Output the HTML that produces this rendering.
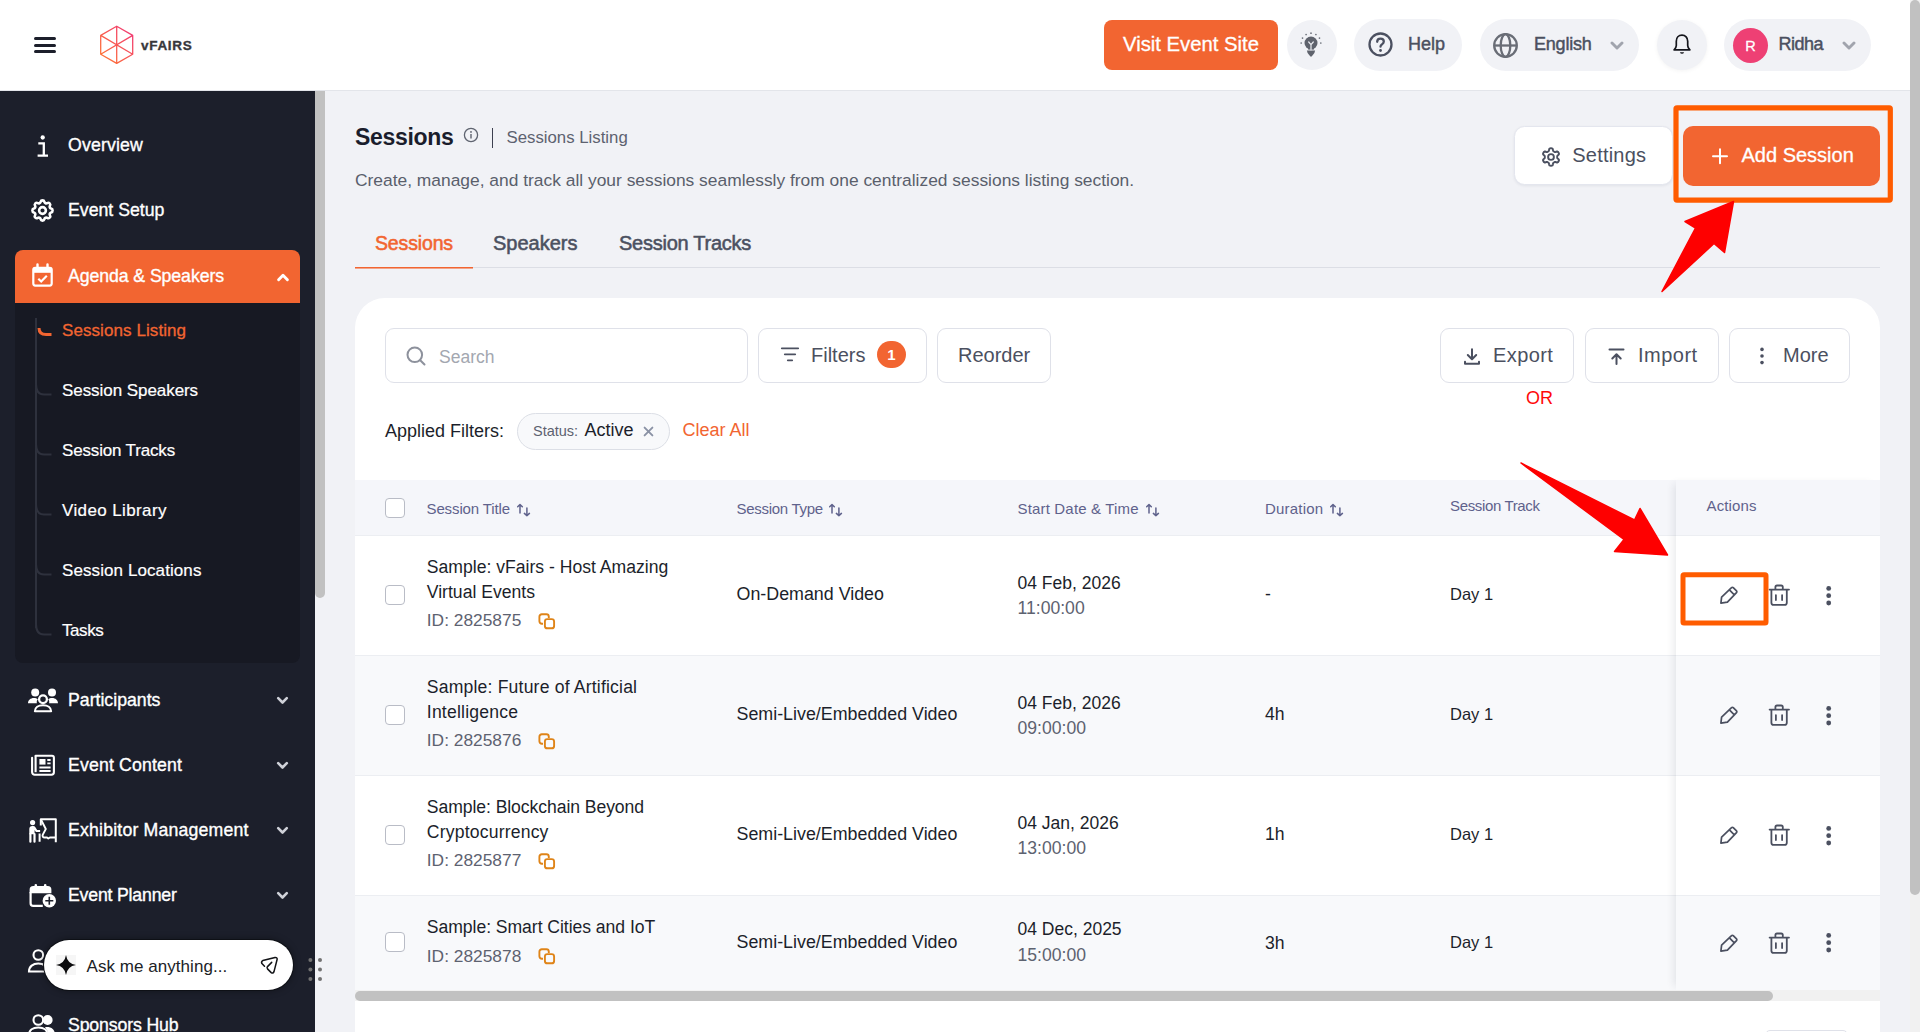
<!DOCTYPE html>
<html lang="en">
<head>
<meta charset="utf-8">
<title>Sessions</title>
<style>
*{box-sizing:border-box;margin:0;padding:0}
html,body{width:1920px;height:1032px;overflow:hidden;background:#f1f2f6;font-family:"Liberation Sans",sans-serif;color:#1c1f2b}
.abs{position:absolute}
.t{position:absolute;white-space:nowrap;line-height:1}
svg{display:block}
/* header */
#hdr{position:absolute;left:0;top:0;width:1910px;height:91px;background:#fff;border-bottom:1px solid #e3e5ea}
.pill{position:absolute;background:#f1f2f6;border-radius:26px;height:51px;top:19px}
/* sidebar */
#sb{position:absolute;left:0;top:91px;width:315px;height:941px;background:#1c1f2b;overflow:hidden}
.nav{position:absolute;left:68px;color:#fff;font-size:17.700px;white-space:nowrap;line-height:20px;-webkit-text-stroke:0.35px #fff}
.sub{position:absolute;left:62px;color:#fff;font-size:17px;white-space:nowrap;line-height:20px;-webkit-text-stroke:0.2px #fff}
/* main */
#card{position:absolute;left:355px;top:298px;width:1525px;height:760px;background:#fff;border-radius:30px}
.btn{position:absolute;top:328px;height:55px;border:1px solid #dfe1e9;border-radius:9px;background:#fff}
.th{position:absolute;font-size:15px;color:#5f628c;white-space:nowrap;line-height:18px}
.td{position:absolute;font-size:17px;color:#1c1f2b;white-space:nowrap;line-height:20px}
.tm{position:absolute;font-size:17px;color:#5d6270;white-space:nowrap;line-height:20px}
.cb{position:absolute;left:385px;width:20px;height:20px;border:1px solid #b9bcc6;border-radius:4px;background:#fff}
.ttl{font-size:17.600px}.typ{font-size:17.850px}.dat{font-size:17.500px}.tim{font-size:17.600px}.idn{font-size:17.350px}.day{font-size:16.500px}.dur{font-size:17.600px}
.row{position:absolute;left:355px;width:1525px;border-top:1px solid #eceef2}
</style>
</head>
<body>
<!-- ============ HEADER ============ -->
<div id="hdr">
  <!-- hamburger -->
  <div class="abs" style="left:34px;top:37px;width:22px;height:3px;border-radius:2px;background:#1c1f2b"></div>
  <div class="abs" style="left:34px;top:43.5px;width:22px;height:3px;border-radius:2px;background:#1c1f2b"></div>
  <div class="abs" style="left:34px;top:50px;width:22px;height:3px;border-radius:2px;background:#1c1f2b"></div>
  <!-- logo -->
  <svg class="abs" style="left:98px;top:24px" width="38" height="42" viewBox="0 0 38 42">
    <defs><linearGradient id="lg" x1="0" y1="1" x2="1" y2="0"><stop offset="0" stop-color="#ff7a2f"/><stop offset="1" stop-color="#f0357a"/></linearGradient></defs>
    <path d="M18.7 2.2 L34.7 11.4 L34.7 30.2 L18.7 39.4 L2.7 30.2 L2.7 11.4 Z M18.7 2.2 L18.7 39.4 M2.7 11.4 L34.7 30.2 M34.7 11.4 L2.7 30.2" fill="none" stroke="url(#lg)" stroke-width="1.3" stroke-linejoin="round"/>
  </svg>
  <div class="t" style="left:141px;top:38.600px;font-size:13.500px;font-weight:bold;color:#37373b;letter-spacing:0.700px;-webkit-text-stroke:0.35px #37373b">vFAIRS</div>

  <!-- visit event site -->
  <div class="abs" style="left:1104px;top:20px;width:174px;height:50px;border-radius:8px;background:#f26531"></div>
  <div class="t" id="ves" style="left:1123px;top:33.500px;font-size:20.300px;color:#fff;-webkit-text-stroke:0.3px #fff">Visit Event Site</div>
  <!-- bulb -->
  <div class="abs" style="left:1287px;top:20px;width:50px;height:50px;border-radius:25px;background:#f1f2f6"></div>
  <svg class="abs" style="left:1299.300px;top:31.400px" width="24" height="27" viewBox="0 0 24 27">
    <circle cx="12" cy="12" r="6.500" fill="#5f636d"/>
    <path d="M9 17h6v1.500h-6z" fill="#5f636d"/>
    <path d="M7.900 19.600h8.200l-.7 2.400-2.600 3.300c-.4.500-1.200.5-1.600 0l-2.600-3.300z" fill="#5f636d"/>
    <path d="M12 18.800v-5.200m0 0-2.300-2.600m2.300 2.600 2.300-2.600" stroke="#eceef3" stroke-width="1.200" fill="none" stroke-linecap="round"/>
    <g fill="#6d717b"><circle cx="2.20" cy="12.00" r="0.850"/><circle cx="3.51" cy="7.10" r="0.850"/><circle cx="7.10" cy="3.51" r="0.850"/><circle cx="12.00" cy="2.20" r="0.850"/><circle cx="16.90" cy="3.51" r="0.850"/><circle cx="20.49" cy="7.10" r="0.850"/><circle cx="21.80" cy="12.00" r="0.850"/></g>
  </svg>
  <!-- help -->
  <div class="pill" style="left:1354px;width:108px;height:52px"></div>
  <svg class="abs" style="left:1367px;top:31.200px" width="27" height="27" viewBox="0 0 27 27"><circle cx="13.500" cy="13.500" r="11" fill="none" stroke="#4b5060" stroke-width="2.300"/><path d="M10.200 10.800c0-1.900 1.400-3.200 3.300-3.200s3.300 1.200 3.300 3c0 1.600-1 2.200-2 2.900-.9.600-1.300 1.100-1.300 2.200" fill="none" stroke="#4b5060" stroke-width="2.300" stroke-linecap="round"/><circle cx="13.500" cy="19.500" r="1.400" fill="#4b5060"/></svg>
  <div class="t" id="help" style="left:1408px;top:35px;font-size:18px;color:#4b5060;-webkit-text-stroke:0.45px #4b5060">Help</div>
  <!-- english -->
  <div class="pill" style="left:1480px;width:159px;height:52px"></div>
  <svg class="abs" style="left:1492px;top:32px" width="27" height="27" viewBox="0 0 27 27"><g fill="none" stroke="#696d76" stroke-width="2.300"><circle cx="13.500" cy="13.500" r="11.300"/><ellipse cx="13.500" cy="13.500" rx="4.800" ry="11.300"/><path d="M2.200 13.500h22.600"/></g></svg>
  <div class="t" id="eng" style="left:1534px;top:35px;font-size:18px;letter-spacing:-0.200px;color:#4b5060;-webkit-text-stroke:0.45px #4b5060">English</div>
  <svg class="abs" style="left:1610px;top:40.500px" width="14" height="10" viewBox="0 0 14 10"><path d="M2 2l5 5 5-5" fill="none" stroke="#a1a4ad" stroke-width="2.900" stroke-linecap="round" stroke-linejoin="round"/></svg>
  <!-- bell -->
  <div class="abs" style="left:1657px;top:20px;width:50px;height:50px;border-radius:25px;background:#f1f2f6;box-shadow:0 1px 4px rgba(0,0,0,.05)"></div>
  <svg class="abs" style="left:1671px;top:33px" width="22" height="24" viewBox="0 0 22 24"><path d="M11 2.200c-3.400 0-5.700 2.600-5.700 6v4.300c0 1.600-.8 3-2.200 4.300h15.800c-1.400-1.300-2.200-2.700-2.200-4.300V8.200c0-3.400-2.300-6-5.700-6z" fill="none" stroke="#15161c" stroke-width="1.700" stroke-linejoin="round"/><path d="M8.900 19.300a2.200 2.200 0 0 0 4.200 0z" fill="#15161c"/></svg>
  <!-- user -->
  <div class="pill" style="left:1724px;width:147px;height:52px"></div>
  <div class="abs" style="left:1733px;top:27.600px;width:35px;height:35px;border-radius:18px;background:#ee4074"></div>
  <div class="t" style="left:1745.300px;top:38.500px;font-size:14.500px;color:#fff;-webkit-text-stroke:0.3px #fff">R</div>
  <div class="t" id="ridha" style="left:1778.500px;top:35px;font-size:18px;letter-spacing:-0.500px;color:#4b5060;-webkit-text-stroke:0.45px #4b5060">Ridha</div>
  <svg class="abs" style="left:1842px;top:40.500px" width="14" height="10" viewBox="0 0 14 10"><path d="M2 2l5 5 5-5" fill="none" stroke="#a1a4ad" stroke-width="2.900" stroke-linecap="round" stroke-linejoin="round"/></svg>
</div>

<!-- ============ SIDEBAR ============ -->
<div id="sb"></div>
<!-- nav icons + labels -->
<svg class="abs" style="left:36px;top:134px" width="13" height="25" viewBox="0 0 13 25"><circle cx="6.700" cy="3.500" r="2.150" fill="#fff"/><path d="M2.300 9.400h5.500v12.300M1.600 21.700h10.400" fill="none" stroke="#fff" stroke-width="2.300"/></svg>
<div class="nav" style="top:135px;letter-spacing:0.16px">Overview</div>
<svg class="abs" style="left:29.300px;top:196.900px" width="27" height="27" viewBox="0 0 24 24"><g fill="none" stroke="#fff" stroke-width="2.300" stroke-linecap="round" stroke-linejoin="round"><path d="M10.325 4.317c.426-1.756 2.924-1.756 3.350 0a1.724 1.724 0 0 0 2.573 1.066c1.543-.94 3.310.826 2.370 2.370a1.724 1.724 0 0 0 1.065 2.572c1.756.426 1.756 2.924 0 3.350a1.724 1.724 0 0 0-1.066 2.573c.94 1.543-.826 3.310-2.370 2.370a1.724 1.724 0 0 0-2.572 1.065c-.426 1.756-2.924 1.756-3.350 0a1.724 1.724 0 0 0-2.573-1.066c-1.543.94-3.310-.826-2.370-2.370a1.724 1.724 0 0 0-1.065-2.572c-1.756-.426-1.756-2.924 0-3.350a1.724 1.724 0 0 0 1.066-2.573c-.94-1.543.826-3.310 2.370-2.370 1 .608 2.296.070 2.572-1.065z"/><circle cx="12" cy="12" r="3"/></g></svg>
<div class="nav" style="top:200px">Event Setup</div>
<!-- active -->
<div class="abs" style="left:15px;top:250px;width:285px;height:53px;background:#f26531;border-radius:8px 8px 0 0"></div>
<div class="abs" style="left:15px;top:303px;width:285px;height:360px;background:#171923;border-radius:0 0 8px 8px"></div>
<svg class="abs" style="left:31px;top:263px" width="23" height="25" viewBox="0 0 23 25"><path d="M6.500 1.500v3.200M16.500 1.500v3.200" stroke="#fff" stroke-width="2.400" stroke-linecap="round"/><rect x="2.300" y="4.800" width="18.400" height="17.800" rx="2" fill="none" stroke="#fff" stroke-width="2.200"/><rect x="2.300" y="4.800" width="18.400" height="5" fill="#fff"/><path d="M7.300 15.700l2.900 2.800 5.600-5.700" fill="none" stroke="#fff" stroke-width="2.200"/></svg>
<div class="nav" style="top:265.500px;letter-spacing:-0.08px">Agenda &amp; Speakers</div>
<svg class="abs" style="left:275.800px;top:272px" width="14" height="10" viewBox="0 0 14 10"><path d="M2.600 7.700l4.400-4.400 4.400 4.400" fill="none" stroke="#fff" stroke-width="2.900" stroke-linecap="round" stroke-linejoin="round"/></svg>
<!-- tree -->
<div class="abs" style="left:35px;top:318px;width:2px;height:310px;background:#2e313d"></div>
<svg class="abs" style="left:35px;top:318px" width="20" height="330" viewBox="0 0 20 330" fill="none" stroke-linecap="butt">
  <path d="M4 10c0 5 3 6.500 7 6.500h5.500" stroke="#f26531" stroke-width="3"/>
  <g stroke="#2e313d" stroke-width="2"><path d="M1 66c0 7 3 10.500 8 10.500h7.500"/><path d="M1 126c0 7 3 10.500 8 10.500h7.500"/><path d="M1 186c0 7 3 10.500 8 10.500h7.500"/><path d="M1 246c0 7 3 10.500 8 10.500h7.500"/><path d="M1 306c0 7 3 10.500 8 10.500h7.500"/></g>
</svg>
<div class="sub" style="top:320.500px;color:#f26531;-webkit-text-stroke:0.3px #f26531;letter-spacing:0.080px">Sessions Listing</div>
<div class="sub" style="top:380.500px;letter-spacing:-0.06px">Session Speakers</div>
<div class="sub" style="top:440.500px;letter-spacing:-0.16px">Session Tracks</div>
<div class="sub" style="top:500.500px;letter-spacing:0.38px">Video Library</div>
<div class="sub" style="top:560.500px;letter-spacing:0.09px">Session Locations</div>
<div class="sub" style="top:620.500px;letter-spacing:-0.44px">Tasks</div>
<!-- lower nav -->
<div class="nav" style="top:690px">Participants</div><svg class="abs" style="left:276px;top:696px" width="13" height="9" viewBox="0 0 13 9"><path d="M2.200 2.200l4.300 4.300 4.300-4.300" fill="none" stroke="#cfd1d8" stroke-width="2.600" stroke-linecap="round" stroke-linejoin="round"/></svg>
<div class="nav" style="top:755px;letter-spacing:0.146px">Event Content</div><svg class="abs" style="left:276px;top:761px" width="13" height="9" viewBox="0 0 13 9"><path d="M2.200 2.200l4.300 4.300 4.300-4.300" fill="none" stroke="#cfd1d8" stroke-width="2.600" stroke-linecap="round" stroke-linejoin="round"/></svg>
<div class="nav" style="top:820px;letter-spacing:0.185px">Exhibitor Management</div><svg class="abs" style="left:276px;top:826px" width="13" height="9" viewBox="0 0 13 9"><path d="M2.200 2.200l4.300 4.300 4.300-4.300" fill="none" stroke="#cfd1d8" stroke-width="2.600" stroke-linecap="round" stroke-linejoin="round"/></svg>
<div class="nav" style="top:885px;letter-spacing:-0.19px">Event Planner</div><svg class="abs" style="left:276px;top:891px" width="13" height="9" viewBox="0 0 13 9"><path d="M2.200 2.200l4.300 4.300 4.300-4.300" fill="none" stroke="#cfd1d8" stroke-width="2.600" stroke-linecap="round" stroke-linejoin="round"/></svg>
<div class="nav" style="top:1015px;letter-spacing:-0.14px">Sponsors Hub</div>
<!-- sidebar scrollbar -->
<div class="abs" style="left:315px;top:91px;width:12px;height:941px;background:#f1f2f6"></div>
<div class="abs" style="left:315px;top:91px;width:10px;height:506.500px;background:#c1c1c1;border-radius:0 0 5px 5px"></div>


<!-- participants icon -->
<svg class="abs" style="left:27px;top:687px" width="32" height="26" viewBox="0 0 32 26">
  <circle cx="8.200" cy="5.600" r="4" fill="#fff"/><circle cx="25" cy="5.600" r="4" fill="#fff"/>
  <path d="M1 16.300c0-3.200 2.600-5.300 5.800-5.300 1.700 0 3 .4 4 1.300-1 1.100-1.300 2.500-.900 4z" fill="#fff"/>
  <path d="M31 16.300c0-3.200-2.600-5.300-5.800-5.300-1.700 0-3 .4-4 1.300 1 1.100 1.300 2.500.900 4z" fill="#fff"/>
  <circle cx="16" cy="12.300" r="3.900" fill="none" stroke="#fff" stroke-width="2.300"/>
  <path d="M7.900 24.300c0-3.800 3.400-6.100 8.100-6.100s8.100 2.300 8.100 6.100z" fill="none" stroke="#fff" stroke-width="2.100" stroke-linejoin="round"/>
</svg>
<!-- event content icon -->
<svg class="abs" style="left:29px;top:753px" width="28" height="24" viewBox="0 0 28 24">
  <path d="M6.600 2.800h16.400c1.100 0 1.900.8 1.900 1.900v14.600c0 1.400-1 2.400-2.400 2.400H5.700c-1.500 0-2.600-1.100-2.600-2.600V4.800" fill="none" stroke="#fff" stroke-width="2.100" stroke-linecap="round"/>
  <path d="M6.600 2.800v16.400" stroke="#fff" stroke-width="2.100"/>
  <rect x="10.400" y="6" width="6.100" height="5.600" fill="#fff"/>
  <path d="M18.300 7h3.300M18.300 10.400h3.300M10.400 14.500h11.200M10.400 18h11.200" stroke="#fff" stroke-width="1.800"/>
</svg>
<!-- exhibitor icon -->
<svg class="abs" style="left:28px;top:817px" width="30" height="27" viewBox="0 0 30 27">
  <circle cx="4.600" cy="5.600" r="2.600" fill="#fff"/>
  <path d="M1.300 12c0-1.700 1.200-2.900 2.900-2.900h1c1 0 1.700.4 2.200 1.200l1.700 2.600h3v2.200h-4.200l-1.300-2v4.200h-5.300z" fill="#fff"/>
  <path d="M2.400 17v7.700M6.500 17v7.700" fill="none" stroke="#fff" stroke-width="2.200" stroke-linecap="round"/>
  <path d="M12.800 8.500v-6.300h15v20M11.600 16.500v8.300M27.800 22.200v3" fill="none" stroke="#fff" stroke-width="2" stroke-linejoin="round"/>
  <path d="M12.800 2.200l5 9.800-3 5.600c-.7 1.600.2 2.900 1.800 2.900h2.400l1.300 1 1.600-1h5.900" fill="none" stroke="#fff" stroke-width="1.900" stroke-linejoin="round"/>
</svg>
<!-- event planner icon -->
<svg class="abs" style="left:28px;top:882px" width="30" height="27" viewBox="0 0 30 27">
  <path d="M7.800 3.400v2.600M17.200 3.400v2.600" stroke="#fff" stroke-width="2.600" stroke-linecap="round"/>
  <path d="M2.600 10.300v-2.600c0-1.600 1.100-2.700 2.700-2.700h14.400c1.600 0 2.700 1.100 2.700 2.700v2.600z" fill="#fff" stroke="#fff" stroke-width="2"/>
  <path d="M2.600 10v11.200c0 1.600 1.100 2.700 2.700 2.700h9.500" fill="none" stroke="#fff" stroke-width="2.200"/>
  <circle cx="21.300" cy="18.700" r="6.700" fill="#fff"/>
  <path d="M21.300 14.700v8M17.300 18.700h8" stroke="#1c1f2b" stroke-width="1.600"/>
</svg>
<!-- hidden user icon -->
<svg class="abs" style="left:27px;top:946px" width="24" height="28" viewBox="0 0 24 28"><circle cx="11.300" cy="9" r="4.800" fill="none" stroke="#fff" stroke-width="2.100"/><path d="M2 25.500c0-5 4-8 9.300-8s9.300 3 9.300 8z" fill="none" stroke="#fff" stroke-width="2.100"/></svg>
<!-- sponsors icon -->
<svg class="abs" style="left:27px;top:1011px" width="30" height="24" viewBox="0 0 30 24"><circle cx="11.300" cy="9" r="4.800" fill="none" stroke="#fff" stroke-width="2.100"/><circle cx="20.600" cy="9" r="5" fill="#fff"/><path d="M2 24c0-5 4-7.500 9.300-7.500s9.300 2.500 9.300 7.500" fill="none" stroke="#fff" stroke-width="2.100"/><path d="M18 16.200c5.500-.8 10 1.800 10 7.800h-5" fill="#fff"/></svg>
<!-- ask pill -->
<div class="abs" style="left:43.700px;top:939.700px;width:249.400px;height:50px;border-radius:25px;background:#fff;box-shadow:0 0 0 1px #0e1016,0 0 7px 1px rgba(0,0,0,.35)"></div>
<div class="abs" style="left:56px;top:955px;width:20px;height:20px;background:#f6f6f6"></div>
<svg class="abs" style="left:56px;top:955px" width="20" height="20" viewBox="0 0 20 20"><path d="M10 0Q11.300 8.700 20 10Q11.300 11.300 10 20Q8.700 11.300 0 10Q8.700 8.700 10 0Z" fill="#0c0c0e"/></svg>
<div class="t" id="ask" style="left:86.500px;top:957.800px;letter-spacing:0.050px;font-size:17px;color:#202226">Ask me anything...</div>
<svg class="abs" style="left:255px;top:950px" width="30" height="30" viewBox="255 950 30 30"><path d="M264.500 966.300L261.900 963.600Q260.900 961.700 262.800 960.600L275 957.600Q277.600 957.400 277.100 959.500L274 971.600Q273 973.900 271.200 972.600L267.500 968.900Q266.600 967.600 267.500 966.600L271.700 962.400" fill="none" stroke="#121316" stroke-width="1.500" stroke-linecap="round" stroke-linejoin="round"/></svg>
<!-- drag dots -->
<svg class="abs" style="left:307px;top:956px" width="18" height="28" viewBox="0 0 18 28"><g fill="#727272"><circle cx="3.400" cy="4" r="2"/><circle cx="13" cy="4" r="2"/><circle cx="3.400" cy="13.500" r="2"/><circle cx="13" cy="13.500" r="2"/><circle cx="3.400" cy="23" r="2"/><circle cx="13" cy="23" r="2"/></g></svg>
<!-- ============ MAIN ============ -->
<!-- title -->
<div class="t" id="ttl" style="left:355px;top:122.500px;font-size:23px;letter-spacing:-0.3px;font-weight:bold;color:#1a1d2c;line-height:28px">Sessions</div>
<svg class="abs" style="left:463px;top:127px" width="16" height="16" viewBox="0 0 16 16"><circle cx="8" cy="8" r="6.600" fill="none" stroke="#5f6470" stroke-width="1.300"/><circle cx="8" cy="4.900" r="0.950" fill="#5f6470"/><path d="M8 7.100v4.300" stroke="#5f6470" stroke-width="1.400"/></svg>
<div class="abs" style="left:492px;top:128px;width:1px;height:20px;background:#3d4050"></div>
<div class="t" id="crumb" style="left:506.500px;top:128px;font-size:16.800px;line-height:20px;color:#5d6270">Sessions Listing</div>
<div class="t" id="desc" style="left:355px;top:170px;font-size:17.400px;line-height:20px;color:#5a5f6c">Create, manage, and track all your sessions seamlessly from one centralized sessions listing section.</div>
<!-- tabs -->
<div class="abs" style="left:355px;top:267px;width:1525px;height:1px;background:#dcdee5"></div>
<div class="abs" style="left:355px;top:267px;width:118px;height:1px;background:#f26531"></div><div class="abs" style="left:355px;top:268px;width:118px;height:1px;background:#f26531;opacity:.55"></div>
<div class="t" id="tab1" style="left:375px;top:231px;font-size:19.500px;letter-spacing:-0.150px;line-height:24px;color:#f26531;-webkit-text-stroke:0.55px #f26531">Sessions</div>
<div class="t" id="tab2" style="left:493px;top:231px;font-size:20px;line-height:24px;color:#4b5060;-webkit-text-stroke:0.55px #4e5363">Speakers</div>
<div class="t" id="tab3" style="left:619px;top:231px;font-size:20px;letter-spacing:-0.250px;line-height:24px;color:#4b5060;-webkit-text-stroke:0.55px #4e5363">Session Tracks</div>
<!-- settings + add session -->
<div class="abs" style="left:1513.500px;top:125.800px;width:159px;height:59.600px;border-radius:10.500px;background:#fff;border:1px solid #e4e6ee;box-shadow:0 1px 3px rgba(20,30,60,.07)"></div>
<svg class="abs" style="left:1538.800px;top:144.900px" width="24" height="24" viewBox="0 0 24 24"><path d="M18.20 12.00 L18.20 11.73 L18.20 11.46 L18.22 11.18 L18.33 10.88 L18.63 10.53 L19.20 10.07 L19.73 9.56 L19.96 9.10 L19.97 8.70 L19.86 8.33 L19.71 7.99 L19.53 7.65 L19.33 7.33 L19.11 7.02 L18.84 6.75 L18.49 6.55 L17.98 6.52 L17.27 6.73 L16.59 6.99 L16.13 7.08 L15.82 7.02 L15.57 6.90 L15.33 6.77 L15.10 6.63 L14.87 6.50 L14.63 6.36 L14.40 6.20 L14.20 5.96 L14.04 5.52 L13.93 4.80 L13.76 4.08 L13.47 3.65 L13.13 3.45 L12.76 3.36 L12.38 3.31 L12.00 3.30 L11.62 3.31 L11.24 3.36 L10.87 3.45 L10.53 3.65 L10.24 4.08 L10.07 4.80 L9.96 5.52 L9.80 5.96 L9.60 6.20 L9.37 6.36 L9.13 6.50 L8.90 6.63 L8.67 6.77 L8.43 6.90 L8.18 7.02 L7.87 7.08 L7.41 6.99 L6.73 6.73 L6.02 6.52 L5.51 6.55 L5.16 6.75 L4.89 7.02 L4.67 7.33 L4.47 7.65 L4.29 7.99 L4.14 8.33 L4.03 8.70 L4.04 9.10 L4.27 9.56 L4.80 10.07 L5.37 10.53 L5.67 10.88 L5.78 11.18 L5.80 11.46 L5.80 11.73 L5.80 12.00 L5.80 12.27 L5.80 12.54 L5.78 12.82 L5.67 13.12 L5.37 13.47 L4.80 13.93 L4.27 14.44 L4.04 14.90 L4.03 15.30 L4.14 15.67 L4.29 16.01 L4.47 16.35 L4.67 16.67 L4.89 16.98 L5.16 17.25 L5.51 17.45 L6.02 17.48 L6.73 17.27 L7.41 17.01 L7.87 16.92 L8.18 16.98 L8.43 17.10 L8.67 17.23 L8.90 17.37 L9.13 17.50 L9.37 17.64 L9.60 17.80 L9.80 18.04 L9.96 18.48 L10.07 19.20 L10.24 19.92 L10.53 20.35 L10.87 20.55 L11.24 20.64 L11.62 20.69 L12.00 20.70 L12.38 20.69 L12.76 20.64 L13.13 20.55 L13.47 20.35 L13.76 19.92 L13.93 19.20 L14.04 18.48 L14.20 18.04 L14.40 17.80 L14.63 17.64 L14.87 17.50 L15.10 17.37 L15.33 17.23 L15.57 17.10 L15.82 16.98 L16.13 16.92 L16.59 17.01 L17.27 17.27 L17.98 17.48 L18.49 17.45 L18.84 17.25 L19.11 16.98 L19.33 16.67 L19.53 16.35 L19.71 16.01 L19.86 15.67 L19.97 15.30 L19.96 14.90 L19.73 14.44 L19.20 13.93 L18.63 13.47 L18.33 13.12 L18.22 12.82 L18.20 12.54 L18.20 12.27Z" fill="none" stroke="#4b5060" stroke-width="1.900" stroke-linejoin="round"/><circle cx="12" cy="12" r="2.900" fill="none" stroke="#4b5060" stroke-width="1.900"/></svg>
<div class="t" id="settings" style="left:1572.300px;top:143px;font-size:20px;letter-spacing:0.200px;line-height:24px;color:#4b5060">Settings</div>
<div class="abs" style="left:1683px;top:126px;width:197px;height:60px;border-radius:10px;background:#f26531"></div>
<svg class="abs" style="left:1711px;top:147px" width="18" height="18" viewBox="0 0 18 18"><path d="M9 2.200v14M2 9.200h14" stroke="#fff" stroke-width="2" stroke-linecap="round"/></svg>
<div class="t" id="addsess" style="left:1741.500px;top:143px;font-size:20px;line-height:24px;color:#fff;-webkit-text-stroke:0.3px #fff">Add Session</div>
<!-- highlight box 1 -->
<svg class="abs" style="left:1660px;top:95px" width="245" height="120" viewBox="1660 95 245 120"><rect x="1676" y="107.800" width="214.300" height="92.300" rx="1" fill="none" stroke="#ff5c00" stroke-width="5.200" stroke-linejoin="round"/></svg>
<!-- card -->
<div id="card"></div>
<!-- toolbar -->
<div class="btn" style="left:385px;width:363px"></div>
<svg class="abs" style="left:405px;top:345px" width="22" height="22" viewBox="0 0 22 22"><circle cx="9.800" cy="9.800" r="7.300" fill="none" stroke="#8d919c" stroke-width="2"/><path d="M15.200 15.200l4.300 4.300" stroke="#8d919c" stroke-width="2" stroke-linecap="round"/></svg>
<div class="t" id="search" style="left:439px;top:346px;font-size:17.500px;line-height:22px;color:#a3a7b0">Search</div>
<div class="btn" style="left:758px;width:169px"></div>
<svg class="abs" style="left:780px;top:346px" width="20" height="17" viewBox="0 0 20 17"><path d="M1.800 2.300h16.400M4.800 8.300h10.400M7.800 14.300h4.400" stroke="#4b5060" stroke-width="1.800" stroke-linecap="round"/></svg>
<div class="t" id="filters" style="left:811px;top:343px;font-size:20px;line-height:24px;color:#4b5060">Filters</div>
<div class="abs" style="left:877px;top:341px;width:29px;height:27px;border-radius:14px;background:#f26531"></div>
<div class="t" style="left:887.300px;top:346.500px;font-size:15px;font-weight:bold;color:#fff">1</div>
<div class="btn" style="left:937px;width:114px"></div>
<div class="t" id="reorder" style="left:958px;top:343px;font-size:20px;line-height:24px;color:#4b5060">Reorder</div>
<div class="btn" style="left:1440px;width:134px"></div>
<svg class="abs" style="left:1463px;top:347px" width="18" height="19" viewBox="0 0 18 19"><path d="M9 2.200v9.800M4.800 8l4.200 4.200 4.200-4.200M2 14.800v1.900h14v-1.900" fill="none" stroke="#4b5060" stroke-width="2" stroke-linecap="round" stroke-linejoin="round"/></svg>
<div class="t" id="export" style="left:1493px;top:343px;font-size:20px;letter-spacing:0.400px;line-height:24px;color:#4b5060">Export</div>
<div class="btn" style="left:1584.500px;width:134px"></div>
<svg class="abs" style="left:1607px;top:347px" width="19" height="19" viewBox="0 0 19 19"><path d="M2.500 2.600h14M9.500 17V7.500M5.300 11.500l4.200-4.200 4.200 4.200" fill="none" stroke="#4b5060" stroke-width="2" stroke-linecap="round" stroke-linejoin="round"/></svg>
<div class="t" id="import" style="left:1638px;top:343px;font-size:20px;letter-spacing:0.500px;line-height:24px;color:#4b5060">Import</div>
<div class="btn" style="left:1729px;width:121px"></div>
<svg class="abs" style="left:1758px;top:346px" width="8" height="20" viewBox="0 0 8 20"><g fill="#4b5060"><circle cx="4" cy="3.400" r="1.800"/><circle cx="4" cy="10" r="1.800"/><circle cx="4" cy="16.600" r="1.800"/></g></svg>
<div class="t" id="more" style="left:1783px;top:343px;font-size:20px;line-height:24px;color:#4b5060">More</div>
<div class="t" id="or" style="left:1526px;top:387.500px;font-size:18px;line-height:20px;color:#ff0a0a">OR</div>
<!-- applied filters -->
<div class="t" id="af" style="left:385px;top:419.800px;font-size:18px;line-height:22px;color:#1c1f2b">Applied Filters:</div>
<div class="abs" style="left:517px;top:413px;width:153px;height:37px;border-radius:19px;background:#f8f9fb;border:1px solid #dcdfe6"></div>
<div class="t" id="status" style="left:533px;top:422px;font-size:14.500px;line-height:18px;color:#5d6270">Status:</div>
<div class="t" id="active" style="left:584.500px;top:418.800px;font-size:18px;line-height:22px;color:#1c1f2b">Active</div>
<svg class="abs" style="left:642.300px;top:425px" width="13" height="13" viewBox="0 0 13 13"><path d="M2.600 2.600l7.800 7.800M10.400 2.600l-7.800 7.800" stroke="#8a92a5" stroke-width="1.900" stroke-linecap="round"/></svg>
<div class="t" id="clear" style="left:682.500px;top:418.800px;font-size:18px;line-height:22px;color:#f26531">Clear All</div>
<!-- table header -->
<div class="abs" style="left:355px;top:480px;width:1525px;height:56px;background:#f5f6fa"></div>
<div class="cb" style="top:498px"></div>
<div class="th" id="h1" style="left:426.500px;top:500.1px;letter-spacing:-0.115px">Session Title</div><svg class="abs" style="left:517px;top:503px" width="14" height="14" viewBox="0 0 14 14"><path d="M3 10V1.500M0.700 3.800l2.300-2.300 2.300 2.300M9.900 4.900v7.900M7.400 10.400l2.500 2.400 2.500-2.400" fill="none" stroke="#5f628c" stroke-width="1.500" stroke-linecap="round" stroke-linejoin="round"/></svg>
<div class="th" id="h2" style="left:736.500px;top:500.1px;letter-spacing:-0.280px">Session Type</div><svg class="abs" style="left:829px;top:503px" width="14" height="14" viewBox="0 0 14 14"><path d="M3 10V1.500M0.700 3.800l2.300-2.300 2.300 2.300M9.900 4.900v7.900M7.400 10.400l2.500 2.400 2.500-2.400" fill="none" stroke="#5f628c" stroke-width="1.500" stroke-linecap="round" stroke-linejoin="round"/></svg>
<div class="th" id="h3" style="left:1017.500px;top:500.1px;letter-spacing:0.170px">Start Date &amp; Time</div><svg class="abs" style="left:1146px;top:503px" width="14" height="14" viewBox="0 0 14 14"><path d="M3 10V1.500M0.700 3.800l2.300-2.300 2.300 2.300M9.900 4.900v7.900M7.400 10.400l2.500 2.400 2.500-2.400" fill="none" stroke="#5f628c" stroke-width="1.500" stroke-linecap="round" stroke-linejoin="round"/></svg>
<div class="th" id="h4" style="left:1265px;top:500.1px;letter-spacing:0.210px">Duration</div><svg class="abs" style="left:1330px;top:503px" width="14" height="14" viewBox="0 0 14 14"><path d="M3 10V1.500M0.700 3.800l2.300-2.300 2.300 2.300M9.900 4.900v7.900M7.400 10.400l2.500 2.400 2.500-2.400" fill="none" stroke="#5f628c" stroke-width="1.500" stroke-linecap="round" stroke-linejoin="round"/></svg>
<div class="th" id="h5" style="left:1450px;top:496.8px;letter-spacing:-0.350px">Session Track</div>
<div class="row" style="top:535px;height:120px;background:#fff"></div>
<div class="cb" style="top:585.0px"></div>
<div class="td ttl" style="left:426.8px;top:557.1px">Sample: vFairs - Host Amazing</div>
<div class="td ttl" style="left:426.8px;top:581.9px">Virtual Events</div>
<div class="tm idn" style="left:426.8px;top:610.4px">ID: 2825875</div>
<svg class="abs" style="left:538px;top:612.6px" width="18" height="17" viewBox="0 0 18 17"><rect x="6.900" y="6.100" width="9.200" height="9.200" rx="2.400" fill="none" stroke="#df8418" stroke-width="1.900"/><path d="M5 10.700h-1.200a2.400 2.400 0 0 1-2.400-2.400v-4.600a2.400 2.400 0 0 1 2.400-2.400h4.600a2.400 2.400 0 0 1 2.400 2.400v1.200" fill="none" stroke="#df8418" stroke-width="1.900"/></svg>
<div class="td typ" style="left:736.500px;top:584.3px">On-Demand Video</div>
<div class="td dat" style="left:1017.500px;top:572.5px">04 Feb, 2026</div>
<div class="tm tim" style="left:1017.500px;top:598.4px">11:00:00</div>
<div class="td dur" style="left:1265px;top:584.4px">-</div>
<div class="td day" style="left:1450px;top:584.3px">Day 1</div>
<div class="row" style="top:655px;height:120px;background:#f8f9fb"></div>
<div class="cb" style="top:705.0px"></div>
<div class="td ttl" style="left:426.8px;top:677.1px;letter-spacing:0.18px">Sample: Future of Artificial</div>
<div class="td ttl" style="left:426.8px;top:701.9px;letter-spacing:0.2px">Intelligence</div>
<div class="tm idn" style="left:426.8px;top:730.4px">ID: 2825876</div>
<svg class="abs" style="left:538px;top:732.6px" width="18" height="17" viewBox="0 0 18 17"><rect x="6.900" y="6.100" width="9.200" height="9.200" rx="2.400" fill="none" stroke="#df8418" stroke-width="1.900"/><path d="M5 10.700h-1.200a2.400 2.400 0 0 1-2.400-2.400v-4.600a2.400 2.400 0 0 1 2.400-2.400h4.600a2.400 2.400 0 0 1 2.400 2.400v1.200" fill="none" stroke="#df8418" stroke-width="1.900"/></svg>
<div class="td typ" style="left:736.500px;top:704.3px">Semi-Live/Embedded Video</div>
<div class="td dat" style="left:1017.500px;top:692.5px">04 Feb, 2026</div>
<div class="tm tim" style="left:1017.500px;top:718.4px">09:00:00</div>
<div class="td dur" style="left:1265px;top:704.4px">4h</div>
<div class="td day" style="left:1450px;top:704.3px">Day 1</div>
<div class="row" style="top:775px;height:120px;background:#fff"></div>
<div class="cb" style="top:825.0px"></div>
<div class="td ttl" style="left:426.8px;top:797.1px;letter-spacing:-0.075px">Sample: Blockchain Beyond</div>
<div class="td ttl" style="left:426.8px;top:821.9px;letter-spacing:0.18px">Cryptocurrency</div>
<div class="tm idn" style="left:426.8px;top:850.4px">ID: 2825877</div>
<svg class="abs" style="left:538px;top:852.6px" width="18" height="17" viewBox="0 0 18 17"><rect x="6.900" y="6.100" width="9.200" height="9.200" rx="2.400" fill="none" stroke="#df8418" stroke-width="1.900"/><path d="M5 10.700h-1.200a2.400 2.400 0 0 1-2.400-2.400v-4.600a2.400 2.400 0 0 1 2.400-2.400h4.600a2.400 2.400 0 0 1 2.400 2.400v1.200" fill="none" stroke="#df8418" stroke-width="1.900"/></svg>
<div class="td typ" style="left:736.500px;top:824.3px">Semi-Live/Embedded Video</div>
<div class="td dat" style="left:1017.500px;top:812.5px">04 Jan, 2026</div>
<div class="tm tim" style="left:1017.500px;top:838.4px">13:00:00</div>
<div class="td dur" style="left:1265px;top:824.4px">1h</div>
<div class="td day" style="left:1450px;top:824.3px">Day 1</div>
<div class="row" style="top:895px;height:95px;background:#f8f9fb"></div>
<div class="cb" style="top:931.8px"></div>
<div class="td ttl" style="left:426.8px;top:916.8px;letter-spacing:-0.05px">Sample: Smart Cities and IoT</div>
<div class="tm idn" style="left:426.8px;top:945.7px">ID: 2825878</div>
<svg class="abs" style="left:538px;top:947.9px" width="18" height="17" viewBox="0 0 18 17"><rect x="6.900" y="6.100" width="9.200" height="9.200" rx="2.400" fill="none" stroke="#df8418" stroke-width="1.900"/><path d="M5 10.700h-1.200a2.400 2.400 0 0 1-2.400-2.400v-4.600a2.400 2.400 0 0 1 2.400-2.400h4.600a2.400 2.400 0 0 1 2.400 2.400v1.200" fill="none" stroke="#df8418" stroke-width="1.900"/></svg>
<div class="td typ" style="left:736.500px;top:932.0px">Semi-Live/Embedded Video</div>
<div class="td dat" style="left:1017.500px;top:918.6px">04 Dec, 2025</div>
<div class="tm tim" style="left:1017.500px;top:944.5px">15:00:00</div>
<div class="td dur" style="left:1265px;top:933.1px">3h</div>
<div class="td day" style="left:1450px;top:932.0px">Day 1</div>
<!-- actions column -->
<div class="abs" style="left:1676px;top:480px;width:204px;height:510px;box-shadow:-6px 0 8px -4px rgba(30,35,60,.10)"></div>
<div class="abs" style="left:1676px;top:480px;width:204px;height:56px;background:#f5f6fa"></div>
<div class="th" id="h6" style="left:1706.500px;top:496.8px;letter-spacing:0.140px">Actions</div>
<div class="abs" style="left:1676px;top:535px;width:204px;height:120px;background:#fff;border-top:1px solid #eceef2"></div>
<svg class="abs" style="left:1719px;top:586.1px" width="19" height="19" viewBox="0 0 19 19"><path d="M1.900 17.100L2.600 11.100L12.550 1.700a1.200 1.200 0 0 1 1.700 0L17.500 4.900a1.200 1.200 0 0 1 0 1.700L8.400 16.100ZM10.400 3.900L15.100 8.600" fill="none" stroke="#4b5060" stroke-width="1.700" stroke-linejoin="round"/></svg><svg class="abs" style="left:1768px;top:584.2px" width="22" height="22" viewBox="0 0 22 22"><path d="M1.600 5.600h19.400M7.400 5.600v-2.500a1.600 1.600 0 0 1 1.600-1.600h4.200a1.600 1.600 0 0 1 1.600 1.600v2.500M3.400 5.900v12.800a2.200 2.200 0 0 0 2.200 2.200h11a2.200 2.200 0 0 0 2.200-2.200v-12.800M7.900 11.100v5M14.100 11.100v5" fill="none" stroke="#4b5060" stroke-width="1.800" stroke-linecap="round" stroke-linejoin="round"/></svg><svg class="abs" style="left:1825px;top:584.7px" width="8" height="22" viewBox="0 0 8 22"><g fill="#4b5060"><circle cx="3.700" cy="3.400" r="2.400"/><circle cx="3.700" cy="10.700" r="2.400"/><circle cx="3.700" cy="18" r="2.400"/></g></svg>
<div class="abs" style="left:1676px;top:655px;width:204px;height:120px;background:#f8f9fb;border-top:1px solid #eceef2"></div>
<svg class="abs" style="left:1719px;top:706.1px" width="19" height="19" viewBox="0 0 19 19"><path d="M1.900 17.100L2.600 11.100L12.550 1.700a1.200 1.200 0 0 1 1.700 0L17.500 4.900a1.200 1.200 0 0 1 0 1.700L8.400 16.100ZM10.400 3.900L15.100 8.600" fill="none" stroke="#4b5060" stroke-width="1.700" stroke-linejoin="round"/></svg><svg class="abs" style="left:1768px;top:704.2px" width="22" height="22" viewBox="0 0 22 22"><path d="M1.600 5.600h19.400M7.400 5.600v-2.500a1.600 1.600 0 0 1 1.600-1.600h4.200a1.600 1.600 0 0 1 1.600 1.600v2.500M3.400 5.900v12.800a2.200 2.200 0 0 0 2.200 2.200h11a2.200 2.200 0 0 0 2.200-2.200v-12.800M7.900 11.100v5M14.100 11.100v5" fill="none" stroke="#4b5060" stroke-width="1.800" stroke-linecap="round" stroke-linejoin="round"/></svg><svg class="abs" style="left:1825px;top:704.7px" width="8" height="22" viewBox="0 0 8 22"><g fill="#4b5060"><circle cx="3.700" cy="3.400" r="2.400"/><circle cx="3.700" cy="10.700" r="2.400"/><circle cx="3.700" cy="18" r="2.400"/></g></svg>
<div class="abs" style="left:1676px;top:775px;width:204px;height:120px;background:#fff;border-top:1px solid #eceef2"></div>
<svg class="abs" style="left:1719px;top:826.1px" width="19" height="19" viewBox="0 0 19 19"><path d="M1.900 17.100L2.600 11.100L12.550 1.700a1.200 1.200 0 0 1 1.700 0L17.500 4.900a1.200 1.200 0 0 1 0 1.700L8.400 16.100ZM10.400 3.900L15.100 8.600" fill="none" stroke="#4b5060" stroke-width="1.700" stroke-linejoin="round"/></svg><svg class="abs" style="left:1768px;top:824.2px" width="22" height="22" viewBox="0 0 22 22"><path d="M1.600 5.600h19.400M7.400 5.600v-2.500a1.600 1.600 0 0 1 1.600-1.600h4.200a1.600 1.600 0 0 1 1.600 1.600v2.500M3.400 5.900v12.800a2.200 2.200 0 0 0 2.200 2.200h11a2.200 2.200 0 0 0 2.200-2.200v-12.800M7.900 11.100v5M14.100 11.100v5" fill="none" stroke="#4b5060" stroke-width="1.800" stroke-linecap="round" stroke-linejoin="round"/></svg><svg class="abs" style="left:1825px;top:824.7px" width="8" height="22" viewBox="0 0 8 22"><g fill="#4b5060"><circle cx="3.700" cy="3.400" r="2.400"/><circle cx="3.700" cy="10.700" r="2.400"/><circle cx="3.700" cy="18" r="2.400"/></g></svg>
<div class="abs" style="left:1676px;top:895px;width:204px;height:95px;background:#f8f9fb;border-top:1px solid #eceef2"></div>
<svg class="abs" style="left:1719px;top:933.8px" width="19" height="19" viewBox="0 0 19 19"><path d="M1.900 17.100L2.600 11.100L12.550 1.700a1.200 1.200 0 0 1 1.700 0L17.500 4.900a1.200 1.200 0 0 1 0 1.700L8.400 16.100ZM10.400 3.900L15.100 8.600" fill="none" stroke="#4b5060" stroke-width="1.700" stroke-linejoin="round"/></svg><svg class="abs" style="left:1768px;top:931.9px" width="22" height="22" viewBox="0 0 22 22"><path d="M1.600 5.600h19.400M7.400 5.600v-2.500a1.600 1.600 0 0 1 1.600-1.600h4.200a1.600 1.600 0 0 1 1.600 1.600v2.500M3.400 5.900v12.800a2.200 2.200 0 0 0 2.200 2.200h11a2.200 2.200 0 0 0 2.200-2.200v-12.800M7.900 11.100v5M14.100 11.100v5" fill="none" stroke="#4b5060" stroke-width="1.800" stroke-linecap="round" stroke-linejoin="round"/></svg><svg class="abs" style="left:1825px;top:932.4px" width="8" height="22" viewBox="0 0 8 22"><g fill="#4b5060"><circle cx="3.700" cy="3.400" r="2.400"/><circle cx="3.700" cy="10.700" r="2.400"/><circle cx="3.700" cy="18" r="2.400"/></g></svg>
<!-- horizontal scrollbar -->
<div class="abs" style="left:355px;top:990px;width:1525px;height:11px;background:#f1f1f1"></div>
<div class="abs" style="left:355px;top:991px;width:1418px;height:9.500px;background:#c1c1c1;border-radius:5px"></div>
<div class="abs" style="left:355px;top:1001px;width:1525px;height:31px;background:#fff"></div>
<div class="abs" style="left:1765px;top:1030px;width:83px;height:10px;border:1px solid #dfe1e9;border-radius:8px"></div>
<!-- highlight box 2 -->
<svg class="abs" style="left:1670px;top:560px" width="110" height="80" viewBox="1670 560 110 80"><rect x="1683" y="574.800" width="83" height="48.300" rx="1" fill="none" stroke="#ff5c00" stroke-width="5" stroke-linejoin="round"/></svg>
<!-- arrows -->
<svg class="abs" style="left:1640px;top:190px" width="120" height="110" viewBox="1640 190 120 110"><path d="M1662 291.500 L1695.500 228 L1685 221.500 L1733.500 201.500 L1724.500 252.500 L1714 243.500 Z" fill="#fe0000" stroke="#fe0000" stroke-width="1.500" stroke-linejoin="round"/></svg>
<svg class="abs" style="left:1510px;top:450px" width="170" height="120" viewBox="1510 450 170 120"><path d="M1521 463 L1634.500 520 L1640 508.500 L1667.500 555 L1614.500 551.500 L1624 539.500 Z" fill="#fe0000" stroke="#fe0000" stroke-width="1.500" stroke-linejoin="round"/></svg>

<!-- page scrollbar -->
<div class="abs" style="left:1910px;top:0;width:10px;height:1032px;background:#f1f1f1"></div>
<div class="abs" style="left:1910px;top:0;width:10px;height:895px;background:#c1c1c1;border-radius:5px"></div>
</body>
</html>
